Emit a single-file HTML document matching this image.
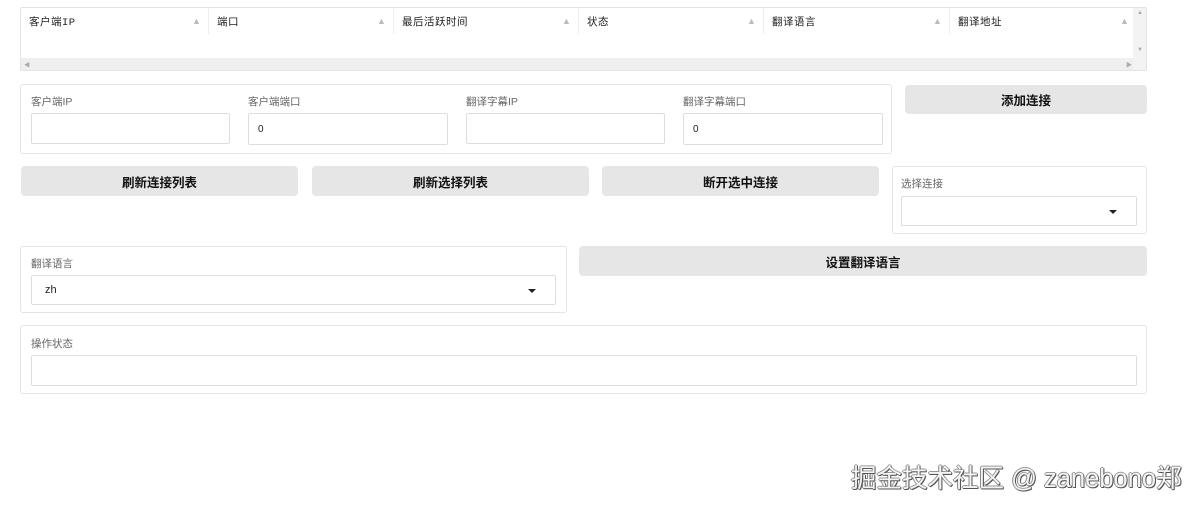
<!DOCTYPE html><html><head><meta charset="utf-8"><style>
*{box-sizing:border-box;margin:0;padding:0}
body{width:1196px;height:507px;background:#fff;position:relative;overflow:hidden;font-family:"Liberation Sans","Noto Sans CJK SC",sans-serif;font-size:11px;color:#222}
.a{position:absolute}
.box{position:absolute;border:1px solid #e4e4e4;border-radius:3px;background:#fff}
.lbl{position:absolute;color:#666;font-size:10.5px}
.inp{position:absolute;border:1px solid #ddd;border-radius:2px;background:#fff;font-size:10px;padding-left:9px;display:flex;align-items:center}
.btn{position:absolute;background:#e6e6e6;border-radius:4px;font-weight:bold;font-size:12.5px;display:flex;align-items:center;justify-content:center;color:#111}
.th{position:absolute;top:8px;height:26px;font-size:10.5px;display:flex;align-items:center;padding-left:8px;border-left:1px solid #eee;font-family:"Liberation Mono","Noto Sans CJK SC",monospace;letter-spacing:0.5px}
.ar{position:absolute;top:16px;font-size:9px;color:#bbb}
.caret{position:absolute;width:0;height:0;border-left:4px solid transparent;border-right:4px solid transparent;border-top:4px solid #222}
</style></head><body>
<div class="box" style="left:20px;top:7px;width:1127px;height:64px;border-radius:2px"></div>
<div class="th" style="left:21px;width:188px;border-left:none">客户端IP</div>
<div class="th" style="left:208px;width:186px">端口</div>
<div class="th" style="left:393px;width:186px">最后活跃时间</div>
<div class="th" style="left:578px;width:186px">状态</div>
<div class="th" style="left:763px;width:186px">翻译语言</div>
<div class="th" style="left:949px;width:184px">翻译地址</div>
<div class="ar" style="left:192px">▲</div><div class="ar" style="left:377px">▲</div><div class="ar" style="left:562px">▲</div><div class="ar" style="left:747px">▲</div><div class="ar" style="left:933px">▲</div><div class="ar" style="left:1120px">▲</div>
<div class="a" style="left:21px;top:58px;width:1112px;height:12px;background:#efefef"></div>
<div class="a" style="left:1133px;top:8px;width:13px;height:62px;background:#f3f3f3"></div>
<div class="a" style="left:1137px;top:10px;font-size:6px;color:#aaa">▲</div>
<div class="a" style="left:1137px;top:47px;font-size:6px;color:#aaa">▼</div>
<div class="a" style="left:24px;top:60px;font-size:6px;color:#aaa">◀</div>
<div class="a" style="left:1126px;top:60px;font-size:6px;color:#aaa">▶</div>

<div class="box" style="left:20px;top:84px;width:872px;height:70px"></div>
<div class="lbl" style="left:31px;top:94px">客户端IP</div>
<div class="lbl" style="left:248px;top:94px">客户端端口</div>
<div class="lbl" style="left:466px;top:94px">翻译字幕IP</div>
<div class="lbl" style="left:683px;top:94px">翻译字幕端口</div>
<div class="inp" style="left:31px;top:113px;width:199px;height:31px"></div>
<div class="inp" style="left:248px;top:113px;width:200px;height:32px">0</div>
<div class="inp" style="left:466px;top:113px;width:199px;height:31px"></div>
<div class="inp" style="left:683px;top:113px;width:200px;height:32px">0</div>
<div class="btn" style="left:905px;top:85px;width:242px;height:29px">添加连接</div>

<div class="btn" style="left:21px;top:166px;width:277px;height:30px">刷新连接列表</div>
<div class="btn" style="left:312px;top:166px;width:277px;height:30px">刷新选择列表</div>
<div class="btn" style="left:602px;top:166px;width:277px;height:30px">断开选中连接</div>
<div class="box" style="left:892px;top:166px;width:255px;height:68px"></div>
<div class="lbl" style="left:901px;top:176px">选择连接</div>
<div class="inp" style="left:901px;top:196px;width:236px;height:30px"></div>
<div class="caret" style="left:1109px;top:210px"></div>

<div class="box" style="left:20px;top:246px;width:547px;height:67px"></div>
<div class="lbl" style="left:31px;top:256px">翻译语言</div>
<div class="inp" style="left:31px;top:275px;width:525px;height:30px;padding-left:13px;font-size:11px">zh</div>
<div class="caret" style="left:528px;top:289px"></div>
<div class="btn" style="left:579px;top:246px;width:568px;height:30px">设置翻译语言</div>

<div class="box" style="left:20px;top:325px;width:1127px;height:69px"></div>
<div class="lbl" style="left:31px;top:336px">操作状态</div>
<div class="inp" style="left:31px;top:355px;width:1106px;height:31px"></div>

<div class="a" style="left:851px;top:458px;font-size:25.5px;color:#f4f4f4;white-space:nowrap;font-family:'Liberation Sans','Noto Sans CJK SC',sans-serif;text-shadow:1px 1px 0 #555,-1px 0 0 #888,0 -1px 0 #999,1px 0 0 #666,0 1px 0 #666">掘金技术社区 @ zanebono郑</div>
</body></html>
